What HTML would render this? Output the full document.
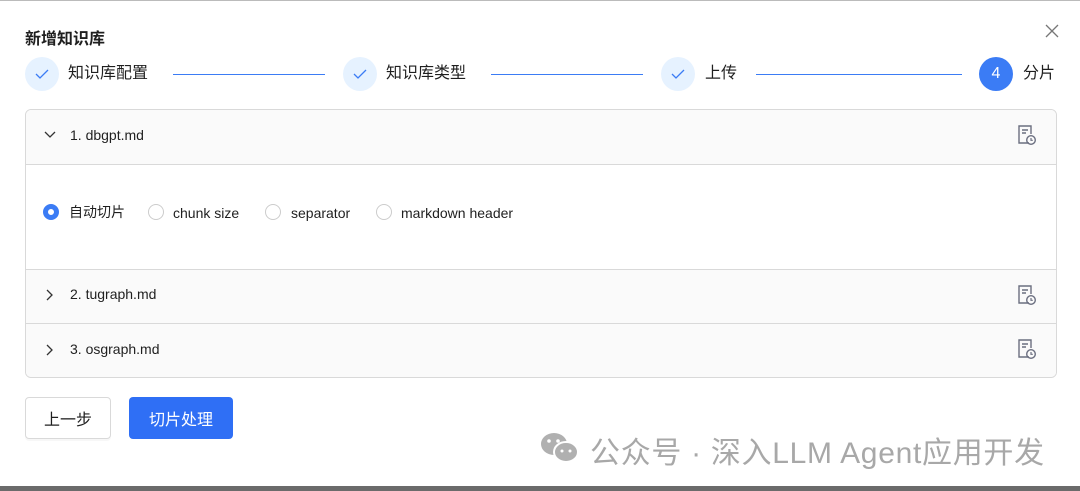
<!DOCTYPE html>
<html><head><meta charset="utf-8"><style>
*{box-sizing:border-box;margin:0;padding:0}
body{width:1080px;height:491px;background:#fff;font-family:"Liberation Sans","Noto Sans CJK SC",sans-serif;color:#1f1f1f;position:relative;overflow:hidden}
.abs{position:absolute}
.top{left:0;top:0;width:1080px;height:1px;background:#bbb}
.bot{left:0;top:486px;width:1080px;height:5px;background:#6b6b6b}
.title{left:25px;top:25px;font-size:16px;font-weight:bold}
.circ{width:34px;height:34px;border-radius:50%;background:#e6f2ff;top:57px;display:flex;align-items:center;justify-content:center}
.lbl{top:63px;font-size:16px;line-height:22px}
.line{top:74px;height:1px;background:#3b7cf5}
.panel{left:25px;top:109px;width:1032px;height:269px;border:1px solid #d9d9d9;border-radius:6px;overflow:hidden}
.row{position:absolute;left:0;width:1030px;background:#fafafa;border-bottom:1px solid #d9d9d9;font-size:14px}
.row span{position:absolute;left:44px;top:17px}
.radio{width:16px;height:16px;border-radius:50%;border:1px solid #ccc;top:204px;background:#fff}
.rl{top:203px;font-size:14px;line-height:18px}
.btn{top:397px;height:42px;border-radius:4px;font-size:16px;display:flex;align-items:center;justify-content:center}
</style></head><body>
<div class="abs top"></div>
<div class="abs title">新增知识库</div>
<svg class="abs" style="left:1045px;top:24px" width="14" height="14" viewBox="0 0 14 14"><path d="M1 1L13 13M13 1L1 13" stroke="#777" stroke-width="1.3"/></svg>

<div class="abs circ" style="left:25px"><svg width="14" height="10" viewBox="0 0 14 10"><path d="M1 5l4 4 8-8" stroke="#3b7cf5" stroke-width="1.3" fill="none"/></svg></div>
<div class="abs lbl" style="left:68px">知识库配置</div>
<div class="abs line" style="left:173px;width:152px"></div>
<div class="abs circ" style="left:343px"><svg width="14" height="10" viewBox="0 0 14 10"><path d="M1 5l4 4 8-8" stroke="#3b7cf5" stroke-width="1.3" fill="none"/></svg></div>
<div class="abs lbl" style="left:386px">知识库类型</div>
<div class="abs line" style="left:491px;width:152px"></div>
<div class="abs circ" style="left:661px"><svg width="14" height="10" viewBox="0 0 14 10"><path d="M1 5l4 4 8-8" stroke="#3b7cf5" stroke-width="1.3" fill="none"/></svg></div>
<div class="abs lbl" style="left:705px">上传</div>
<div class="abs line" style="left:756px;width:206px"></div>
<div class="abs circ" style="left:979px;background:#3b7cf5;color:#fff;font-size:16px">4</div>
<div class="abs lbl" style="left:1023px">分片</div>

<div class="abs panel">
 <div class="row" style="top:0;height:55px"><svg class="abs" style="left:18px;top:21px" width="12" height="8" viewBox="0 0 12 8"><path d="M1 1l5 5 5-5" stroke="#333" stroke-width="1.3" fill="none"/></svg><span>1. dbgpt.md</span></div>
 <div class="row" style="top:159px;height:55px;border-top:1px solid #d9d9d9"><svg class="abs" style="left:20px;top:19px" width="8" height="12" viewBox="0 0 8 12"><path d="M1 1l5 5-5 5" stroke="#333" stroke-width="1.3" fill="none"/></svg><span style="top:16px">2. tugraph.md</span></div>
 <div class="row" style="top:214px;height:55px;border-bottom:none"><svg class="abs" style="left:20px;top:20px" width="8" height="12" viewBox="0 0 8 12"><path d="M1 1l5 5-5 5" stroke="#333" stroke-width="1.3" fill="none"/></svg><span>3. osgraph.md</span></div>
</div>
<svg class="abs" style="left:1017px;top:124px" width="20" height="22" viewBox="0 0 20 22"><path d="M12 19H2V2h12v8M5 6h6M5 9h4" stroke="#6b6f80" stroke-width="1.4" fill="none"/><circle cx="14" cy="16" r="4.3" stroke="#6b6f80" stroke-width="1.4" fill="none"/><path d="M14 14v2.3h1.8" stroke="#6b6f80" stroke-width="1.2" fill="none"/></svg>
<svg class="abs" style="left:1017px;top:284px" width="20" height="22" viewBox="0 0 20 22"><path d="M12 19H2V2h12v8M5 6h6M5 9h4" stroke="#6b6f80" stroke-width="1.4" fill="none"/><circle cx="14" cy="16" r="4.3" stroke="#6b6f80" stroke-width="1.4" fill="none"/><path d="M14 14v2.3h1.8" stroke="#6b6f80" stroke-width="1.2" fill="none"/></svg>
<svg class="abs" style="left:1017px;top:338px" width="20" height="22" viewBox="0 0 20 22"><path d="M12 19H2V2h12v8M5 6h6M5 9h4" stroke="#6b6f80" stroke-width="1.4" fill="none"/><circle cx="14" cy="16" r="4.3" stroke="#6b6f80" stroke-width="1.4" fill="none"/><path d="M14 14v2.3h1.8" stroke="#6b6f80" stroke-width="1.2" fill="none"/></svg>

<div class="abs radio" style="left:43px;border:5px solid #3b7cf5"></div>
<div class="abs rl" style="left:69px">自动切片</div>
<div class="abs radio" style="left:148px"></div>
<div class="abs rl" style="left:173px;top:204px">chunk size</div>
<div class="abs radio" style="left:265px"></div>
<div class="abs rl" style="left:291px;top:204px">separator</div>
<div class="abs radio" style="left:376px"></div>
<div class="abs rl" style="left:401px;top:204px">markdown header</div>

<div class="abs btn" style="left:25px;width:86px;border:1px solid #d9d9d9;box-shadow:0 2px 0 rgba(0,0,0,.03)">上一步</div>
<div class="abs btn" style="left:129px;width:104px;background:#2f6ff5;color:#fff">切片处理</div>

<svg class="abs" style="left:540px;top:430px" width="40" height="36" viewBox="0 0 40 36"><ellipse cx="14" cy="14" rx="13" ry="11" fill="#b0b0b0"/><ellipse cx="26" cy="22" rx="12" ry="10" fill="#b0b0b0" stroke="#fff" stroke-width="2"/><circle cx="9" cy="11" r="1.8" fill="#fff"/><circle cx="18" cy="11" r="1.8" fill="#fff"/><circle cx="22" cy="21" r="1.5" fill="#fff"/><circle cx="30" cy="21" r="1.5" fill="#fff"/></svg>
<div class="abs" style="left:590px;top:428px;font-size:30px;color:#a8a8a8;letter-spacing:0.7px">公众号 · 深入LLM Agent应用开发</div>
<div class="abs bot"></div>
</body></html>
